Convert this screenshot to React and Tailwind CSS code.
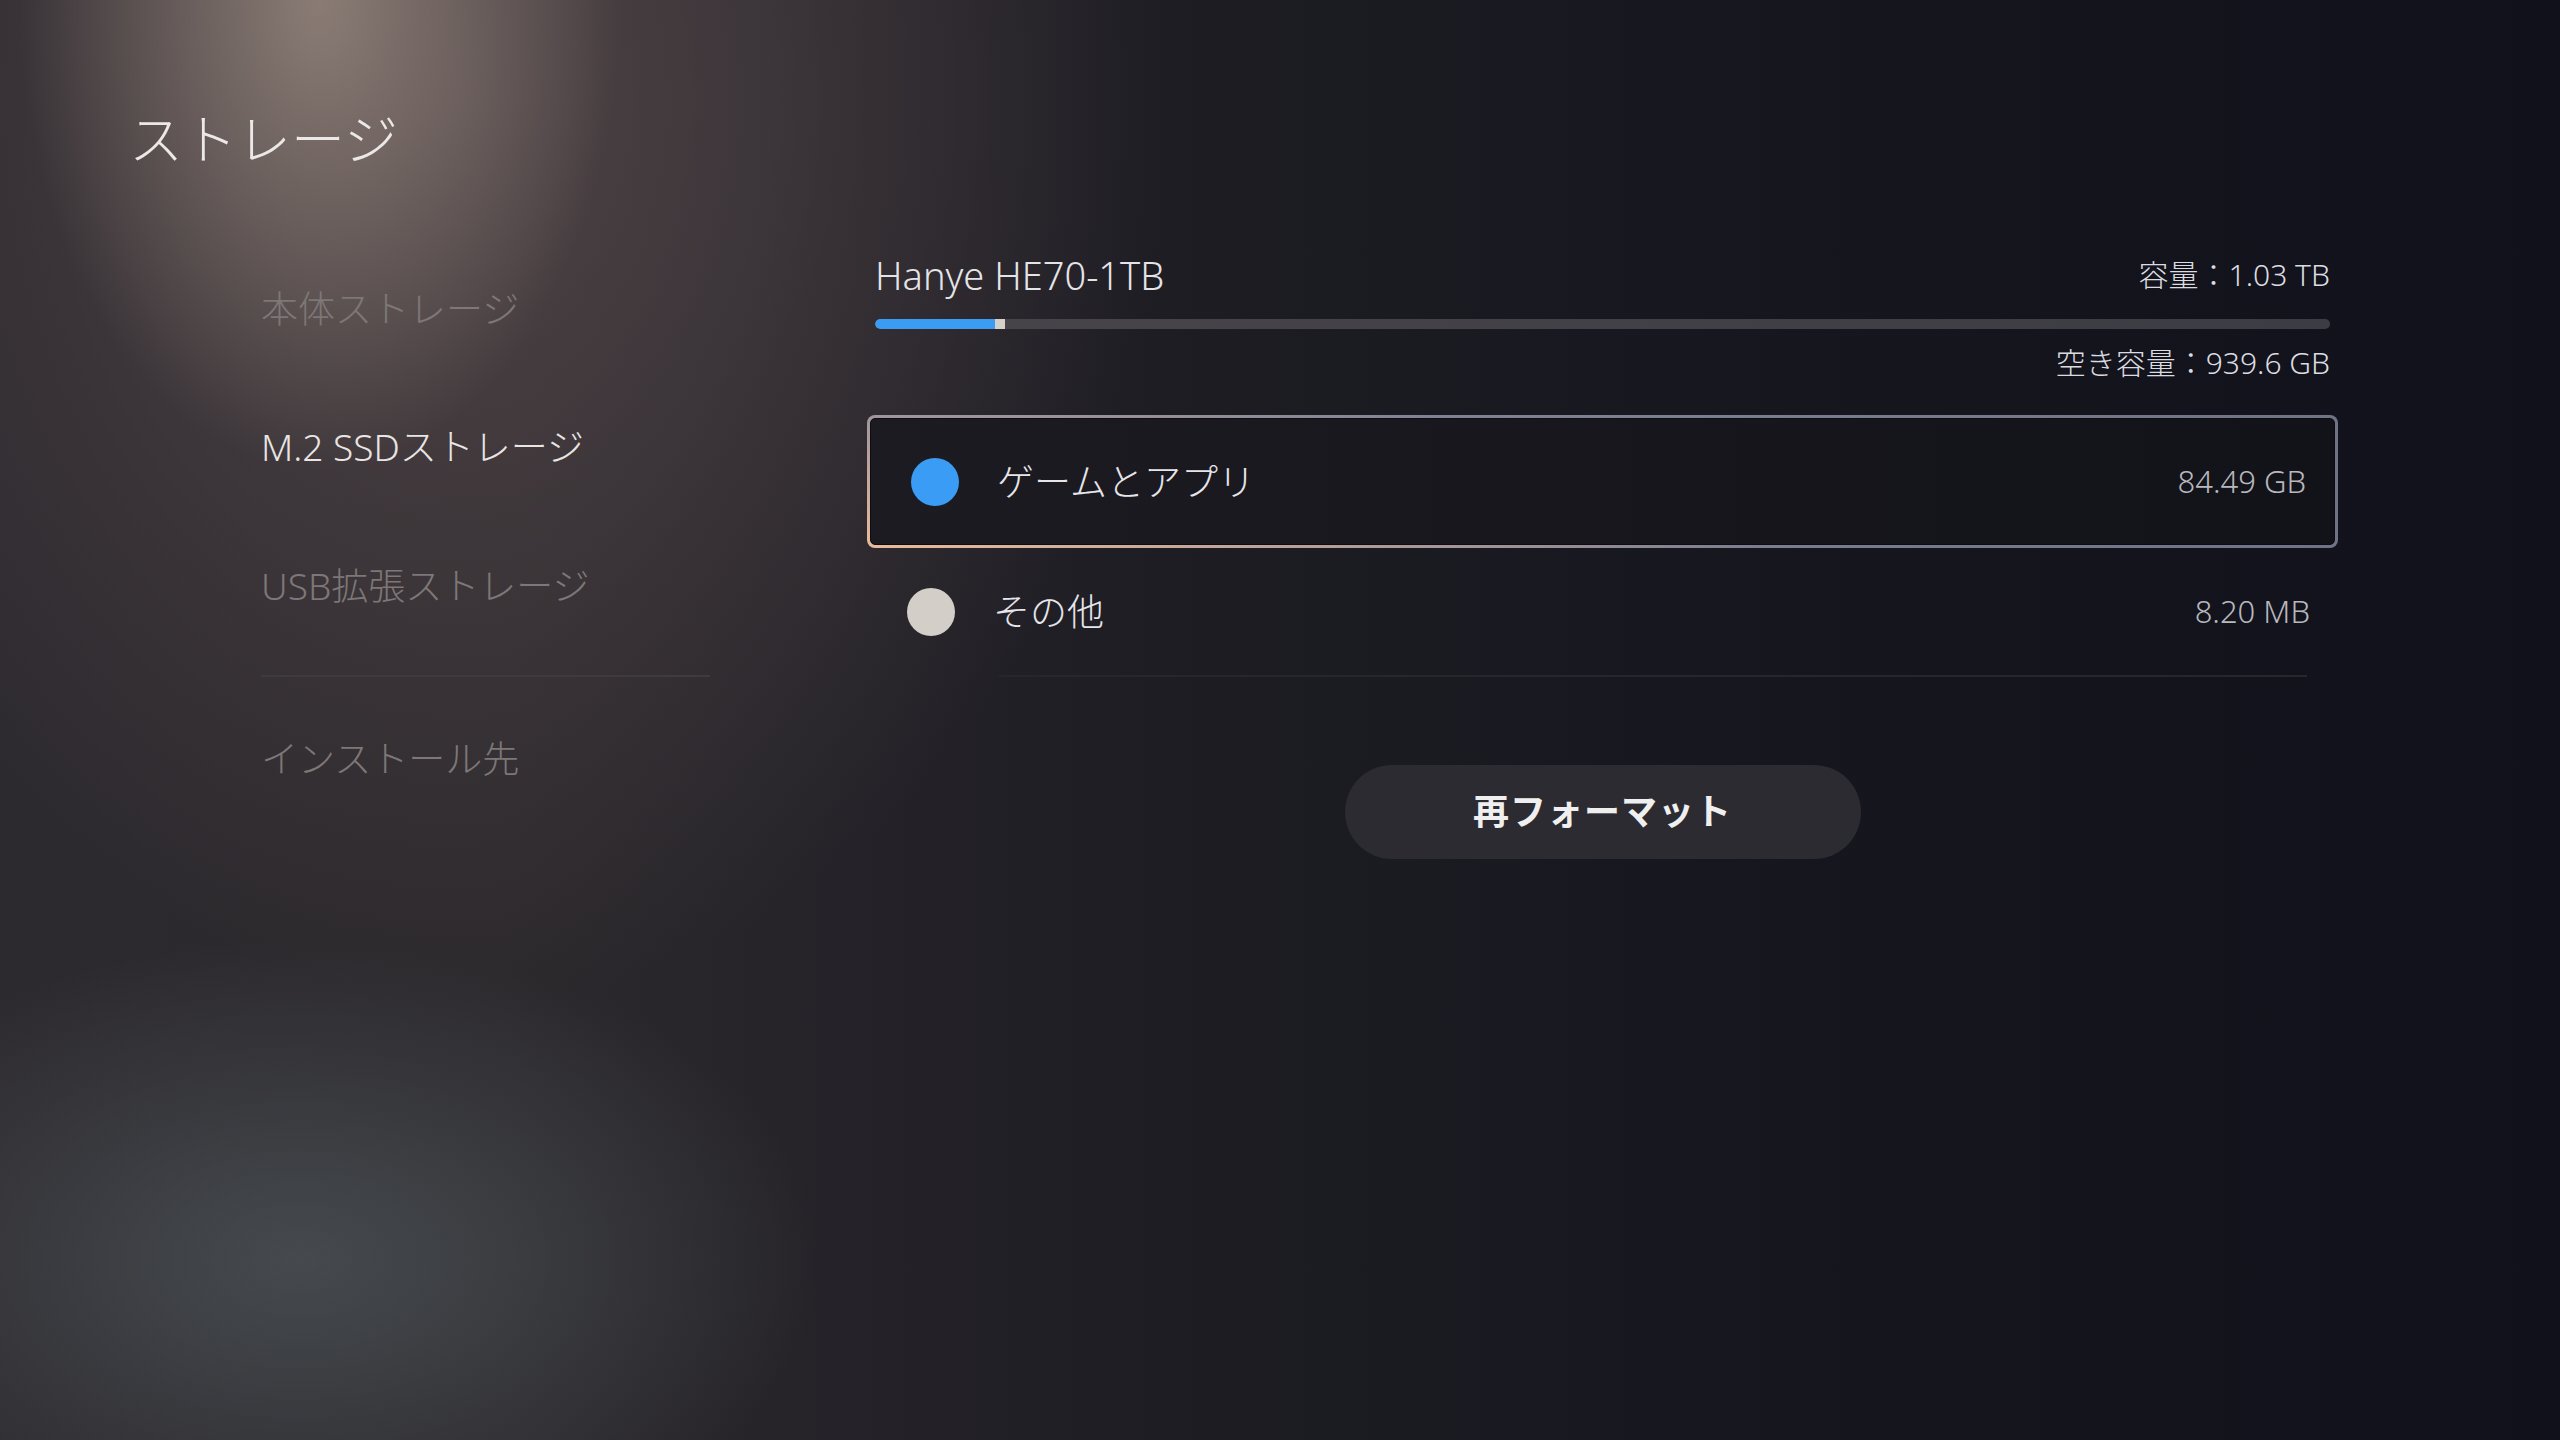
import React from 'react';

const navItems = [
  { label: '本体ストレージ', active: false, mt: 'mt-[19px]' },
  { label: 'M.2 SSDストレージ', active: true, mt: 'mt-[58px]' },
  { label: 'USB拡張ストレージ', active: false, mt: 'mt-[59px]' },
];

const StorageRow = ({ color, label, value }) => (
  <div className="flex items-center h-full pl-[40px] pr-[28px]">
    <span className={`w-[48px] h-[48px] rounded-full shrink-0 ${color}`} />
    <span className="ml-[38px] text-[37px] leading-none text-[#e6e5ea]">{label}</span>
    <span className="ml-auto text-[31px] leading-none text-[#b8b8bf]">{value}</span>
  </div>
);

const App = () => {
  return (
    <div className="w-[2560px] h-[1440px] overflow-hidden font-['Noto_Sans','Noto_Sans_CJK_JP',sans-serif] font-light bg-[radial-gradient(ellipse_300px_470px_at_320px_0px,rgba(150,135,126,0.85),rgba(150,135,126,0)_100%),radial-gradient(ellipse_700px_900px_at_470px_100px,rgba(100,84,86,0.62),rgba(100,84,86,0)_100%),radial-gradient(ellipse_520px_320px_at_300px_1260px,rgba(80,88,92,0.7),rgba(80,88,92,0)_100%),linear-gradient(90deg,#2d2a2f_0%,#2c292d_20%,#1e1d24_45%,#15161e_70%,#10111a_100%)]">
      {/* Header */}
      <h1 className="pl-[129px] pt-[112px] text-[54px] leading-none font-light text-[#ebe8e7]">ストレージ</h1>

      <div className="flex mt-[83px]">
        {/* Sidebar */}
        <nav className="ml-[261px] w-[449px] flex flex-col">
          {navItems.map((item) => (
            <div
              key={item.label}
              className={`${item.mt} h-[80px] flex items-center text-[37px] leading-none ${
                item.active ? 'text-[#e8e5e4]' : 'text-[#7d7777]'
              }`}
            >
              {item.label}
            </div>
          ))}
          <div className="mt-[50px] h-[2px] bg-[#3e3a3d]" />
          <div className="mt-[41px] h-[80px] flex items-center text-[37px] leading-none text-[#7d7777]">
            インストール先
          </div>
        </nav>

        {/* Main panel */}
        <main className="ml-[157px] w-[1471px] flex flex-col">
          <div className="px-[8px] h-[52px] flex items-center justify-between">
            <span className="text-[38px] leading-none text-[#e4e4e8]">Hanye HE70-1TB</span>
            <span className="text-[30px] leading-none text-[#dcdce0]">容量：1.03 TB</span>
          </div>

          <div className="mx-[8px] mt-[18px] h-[10px] rounded-full bg-[linear-gradient(90deg,#48454a,#3c3c44)] flex overflow-hidden">
            <div className="w-[120px] h-full bg-[#3a9cf2] rounded-l-full" />
            <div className="w-[10px] h-full bg-[#d4d0cc]" />
          </div>

          <div className="px-[8px] mt-[14px] h-[40px] flex items-center justify-end">
            <span className="text-[30px] leading-none text-[#dcdce0]">空き容量：939.6 GB</span>
          </div>

          {/* Selected row */}
          <div className="mt-[32px] h-[133px] p-[3px] rounded-[8px] bg-[radial-gradient(ellipse_900px_170px_at_0%_100%,#e9bb9c_0%,rgba(233,187,156,0)_100%),linear-gradient(90deg,#8b8b9d,#6f7386)]">
            <div className="h-full rounded-[5px] border border-[#0c0c12] bg-[linear-gradient(90deg,#1c1b21,#121219)]">
              <StorageRow color="bg-[#3a9cf4]" label="ゲームとアプリ" value="84.49 GB" />
            </div>
          </div>

          <div className="h-[127px]">
            <StorageRow color="bg-[#d3cfc8]" label="その他" value="8.20 MB" />
          </div>

          <div className="ml-[132px] mr-[31px] h-[2px] bg-[#26262d]" />

          <div className="mt-[88px] flex justify-center">
            <button className="w-[516px] h-[94px] rounded-full bg-[#2b2b31] text-[36px] font-bold leading-none text-[#efefef] tracking-[1px]">
              再フォーマット
            </button>
          </div>
        </main>
      </div>
    </div>
  );
};

export default App;
